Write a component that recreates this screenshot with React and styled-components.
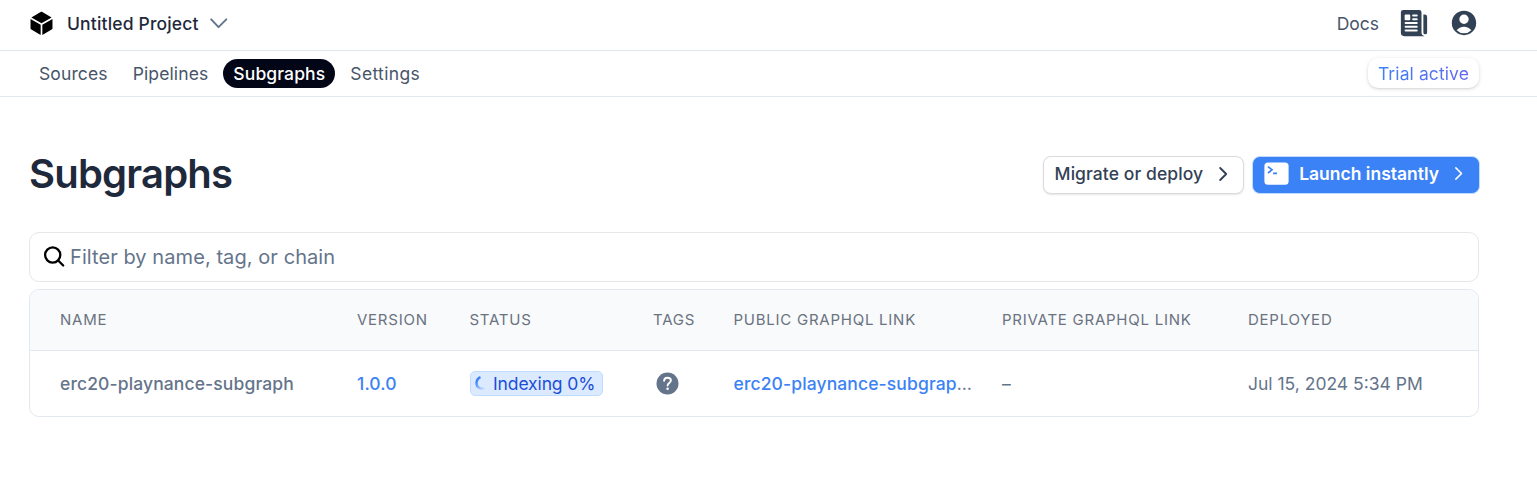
import React from "react";
import styled, { createGlobalStyle } from "styled-components";
import { HiCube, HiUserCircle } from "react-icons/hi2";
import { IoNewspaper } from "react-icons/io5";

const Global = createGlobalStyle`
  * { box-sizing: border-box; }
  body {
    margin: 0;
    background: #fff;
    color: #475569;
    font-family: Inter, "Liberation Sans", sans-serif;
    font-size: 17.5px;
    line-height: 25px;
  }
  svg { display: block; flex: none; }
`;

const TopBar = styled.header`
  display: flex;
  align-items: center;
  justify-content: space-between;
  height: 51px;
  padding: 0 58px 4px 28px;
  border-bottom: 1px solid #e2e8f0;
`;

const ProjectPicker = styled.div`
  display: flex;
  align-items: center;
  color: #1e293b;
  font-weight: 500;
  letter-spacing: 0.17px;
  > svg:first-child { color: #000; margin-right: 12px; }
  > svg:last-child { color: #64748b; margin-left: 9px; }
`;

const TopActions = styled.div`
  display: flex;
  align-items: center;
  color: #334155;
  > svg:nth-of-type(1) { margin-left: 20px; }
  > svg:nth-of-type(2) { margin-left: 20px; }
`;

const DocsLink = styled.span`
  color: #475569;
`;

const NavBar = styled.nav`
  display: flex;
  align-items: center;
  justify-content: space-between;
  height: 46px;
  padding: 0 58px 0 29px;
  border-bottom: 1px solid #e2e8f0;
`;

const Tabs = styled.div`
  display: flex;
  gap: 5px;
  letter-spacing: 0.12px;
`;

const Tab = styled.span`
  height: 29px;
  padding: 2px 10px;
  border-radius: 15px;
  color: ${(p) => (p.$active ? "#fff" : "#475569")};
  background: ${(p) => (p.$active ? "#020617" : "transparent")};
  font-weight: ${(p) => (p.$active ? 500 : 400)};
  &:last-child { letter-spacing: 0.35px; }
`;

const TrialBadge = styled.div`
  height: 30px;
  padding: 3px 10px 2px;
  margin-bottom: 1px;
  border-radius: 10px;
  box-shadow: 0 1px 4px rgba(0, 0, 0, 0.12), 0 1px 2px rgba(0, 0, 0, 0.08);
  letter-spacing: 0.1px;
  span {
    color: transparent;
    background: linear-gradient(to right, #3b82f6, #6366f1);
    background-clip: text;
  }
`;

const Content = styled.main`
  padding: 57px 58px 0 29px;
`;

const TitleRow = styled.div`
  display: flex;
  align-items: center;
  justify-content: space-between;
  height: 40px;
`;

const Title = styled.h1`
  margin: 0;
  padding-bottom: 1px;
  color: #1e293b;
  font-size: 40px;
  font-weight: 600;
  line-height: 40px;
  letter-spacing: -0.8px;
`;

const Buttons = styled.div`
  display: flex;
  gap: 8px;
  margin: 1px -1px 0 0;
`;

const Button = styled.button`
  display: flex;
  align-items: center;
  height: 38px;
  padding: ${(p) => (p.$primary ? "0 12px 2px 11px" : "0 11px 2px 11px")};
  border: 1px solid ${(p) => (p.$primary ? "#bfdbfe" : "#d9dbdf")};
  border-radius: 8px;
  background: ${(p) => (p.$primary ? "#3b82f6" : "#fff")};
  color: ${(p) => (p.$primary ? "#fff" : "#334155")};
  box-shadow: ${(p) => (p.$primary ? "none" : "0 1px 2px rgba(0,0,0,.1)")};
  font: ${(p) => (p.$primary ? 600 : 500)} 17.5px/25px Inter, sans-serif;
  letter-spacing: ${(p) => (p.$primary ? 0 : 0.08)}px;
  white-space: nowrap;
`;

const ButtonLabel = styled.span`
  margin-right: 11px;
  svg + & { margin-left: 10px; }
`;

const Search = styled.label`
  display: flex;
  align-items: center;
  height: 50px;
  margin-top: 38px;
  padding: 0 13px;
  border: 1px solid #e5e7eb;
  border-radius: 10px;
  input {
    flex: 1;
    padding: 0;
    margin-left: 5px;
    border: 0;
    outline: 0;
    font: 400 20px/30px Inter, sans-serif;
    letter-spacing: 0.07px;
  }
  input::placeholder { color: #64748b; opacity: 1; }
`;

const Table = styled.div`
  margin-top: 7px;
  border: 1px solid #e2e8f0;
  border-radius: 10px;
  overflow: hidden;
`;

const Row = styled.div`
  display: grid;
  grid-template-columns: 297px 112.5px 183.5px 80.5px 268.5px 246px 1fr;
  align-items: center;
  height: ${(p) => (p.$head ? 61 : 65)}px;
  padding-left: 30px;
  ${(p) =>
    p.$head &&
    `
    padding-bottom: 2px;
    background: #f8fafc;
    border-bottom: 1px solid #e2e8f0;
    font-size: 15px;
    letter-spacing: 0.75px;
    text-transform: uppercase;
  `}
`;

const Cell = styled.div`
  color: ${(p) => (p.$link ? "#3b82f6" : p.$head ? "#6b7280" : "#64748b")};
  font-weight: ${(p) => (p.$strong ? 500 : 400)};
  letter-spacing: ${(p) => (p.$strong ? "0.12px" : "inherit")};
  white-space: nowrap;
`;

const Ellipsis = styled.span`
  color: #64748b;
  font-weight: 400;
`;

const Status = styled.span`
  display: flex;
  align-items: center;
  gap: 5.5px;
  width: max-content;
  height: 25px;
  margin-bottom: 1px;
  padding: 0 7px 0 3px;
  border: 1px solid #bfdbfe;
  border-radius: 5px;
  background: #dbeafe;
  color: #1d4ed8;
  letter-spacing: -0.12px;
`;

const TagHint = styled.div`
  padding-left: 3px;
  color: #64748b;
`;

const Chevron = ({ d, size, width }) => (
  <svg width={size} height={size} viewBox="0 0 24 24" fill="none" stroke="currentColor" strokeWidth={width} strokeLinecap="round" strokeLinejoin="round">
    <path d={d} />
  </svg>
);

const RIGHT = "m8.25 4 8 8-8 8";
const DOWN = "m20 8-8.5 8.5-8-8.5";

const Spinner = () => (
  <svg width="14" height="16" viewBox="0 0 14 16" fill="none">
    <defs>
      <linearGradient id="arc" x1="2" y1="3" x2="11" y2="13" gradientUnits="userSpaceOnUse">
        <stop offset="0.2" stopColor="#3b82f6" />
        <stop offset="1" stopColor="#3b82f6" stopOpacity="0.1" />
      </linearGradient>
    </defs>
    <path d="M6.5 2.2C1.8 4 1.2 10.5 5 12.7c1.6 1 3.5 1.3 5.5.8" stroke="url(#arc)" strokeWidth="2.4" />
  </svg>
);

const Terminal = () => (
  <svg width="25" height="23" viewBox="0 0 25 23" fill="none">
    <rect x="0.4" y="0.4" width="24.2" height="22.4" rx="3.6" fill="#fff" />
    <path d="m4 4.7 4 3.1-4 3.2M9 11.3h4" stroke="#3b82f6" strokeWidth="1.7" />
  </svg>
);

const Question = () => (
  <svg width="23" height="23" viewBox="0 0 23 23" fill="none">
    <circle cx="11.5" cy="11.5" r="11" fill="#64748b" />
    <path d="M8.1 8.8c.1-2 1.5-3.1 3.4-3.1s3.4 1.1 3.4 2.8c0 2.4-3.3 2.5-3.3 5" stroke="#fff" strokeWidth="1.9" strokeLinecap="round" />
    <circle cx="11.6" cy="16.7" r="1.3" fill="#fff" />
  </svg>
);

const columns = ["Name", "Version", "Status", "Tags", "Public GraphQL link", "Private GraphQL link", "Deployed"];

export default function App() {
  return (
    <>
      <Global />
      <TopBar>
        <ProjectPicker>
          <HiCube size={27} />
          Untitled Project
          <Chevron d={DOWN} size={22} width={2.1} />
        </ProjectPicker>
        <TopActions>
          <DocsLink>Docs</DocsLink>
          <IoNewspaper size={30} />
          <HiUserCircle size={30} />
        </TopActions>
      </TopBar>
      <NavBar>
        <Tabs>
          <Tab>Sources</Tab>
          <Tab>Pipelines</Tab>
          <Tab $active>Subgraphs</Tab>
          <Tab>Settings</Tab>
        </Tabs>
        <TrialBadge><span>Trial active</span></TrialBadge>
      </NavBar>
      <Content>
        <TitleRow>
          <Title>Subgraphs</Title>
          <Buttons>
            <Button>
              <ButtonLabel>Migrate or deploy</ButtonLabel>
              <Chevron d={RIGHT} size={18} width={2.5} />
            </Button>
            <Button $primary>
              <Terminal />
              <ButtonLabel>Launch instantly</ButtonLabel>
              <Chevron d={RIGHT} size={17} width={2.2} />
            </Button>
          </Buttons>
        </TitleRow>
        <Search>
          <svg width="22" height="22" viewBox="0 0 22 22" fill="none" stroke="#000" strokeWidth="2.3" strokeLinecap="round">
            <circle cx="9.7" cy="9" r="7.6" />
            <path d="m15.2 14.5 5 5" />
          </svg>
          <input placeholder="Filter by name, tag, or chain" />
        </Search>
        <Table>
          <Row $head>
            {columns.map((c) => <Cell key={c} $head>{c}</Cell>)}
          </Row>
          <Row>
            <Cell $strong>erc20-playnance-subgraph</Cell>
            <Cell $link $strong>1.0.0</Cell>
            <Cell><Status><Spinner />Indexing 0%</Status></Cell>
            <TagHint><Question /></TagHint>
            <Cell $link $strong>erc20-playnance-subgrap<Ellipsis>…</Ellipsis></Cell>
            <Cell>–</Cell>
            <Cell>Jul 15, 2024 5:34 PM</Cell>
          </Row>
        </Table>
      </Content>
    </>
  );
}
